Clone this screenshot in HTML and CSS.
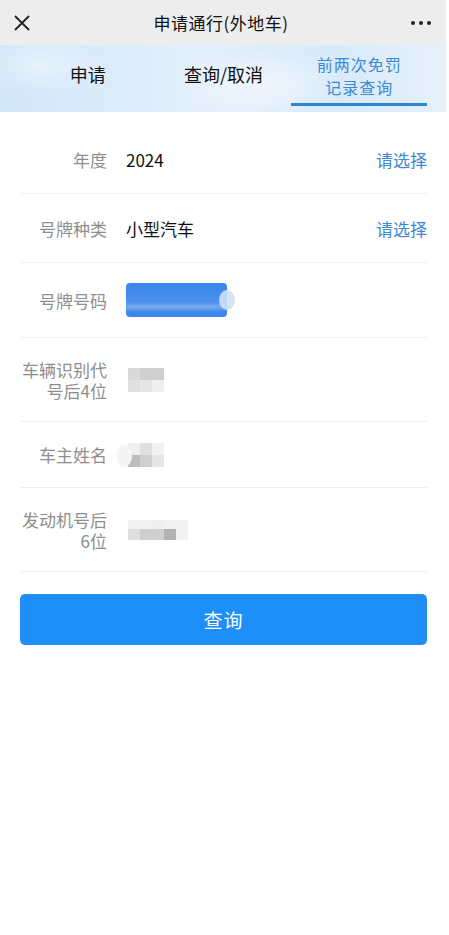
FILE: index.html
```html
<!DOCTYPE html>
<html lang="zh-CN">
<head>
<meta charset="utf-8">
<title>申请通行(外地车)</title>
<link rel="stylesheet" href="styles.css">
</head>
<body>
<div class="app">
  <header class="topbar">
    <svg class="close" width="18" height="18" viewBox="0 0 18 18"><path d="M2 2L16 16M16 2L2 16" stroke="#222" stroke-width="1.8" fill="none"/></svg>
    <div class="title">申请通行(外地车)</div>
    <div class="more"><span></span><span></span><span></span></div>
  </header>
  <nav class="tabs">
    <div class="tab">申请</div>
    <div class="tab">查询/取消</div>
    <div class="tab active">前两次免罚<br>记录查询</div>
  </nav>
  <main class="form">
    <div class="row">
      <div class="label">年度</div>
      <div class="value">2024</div>
      <div class="pick">请选择</div>
    </div>
    <div class="row">
      <div class="label">号牌种类</div>
      <div class="value">小型汽车</div>
      <div class="pick">请选择</div>
    </div>
    <div class="row">
      <div class="label">号牌号码</div>
      <div class="value"><div class="plate"></div></div>
    </div>
    <div class="row tall">
      <div class="label">车辆识别代号后4位</div>
      <div class="value">
        <div class="mask m3">
          <i class="c1"></i><i class="c2 w2"></i>
          <i class="c3"></i><i class="c4"></i><i class="c5"></i>
        </div>
      </div>
    </div>
    <div class="row short">
      <div class="label">车主姓名</div>
      <div class="value">
        <div class="mask m3 name">
          <i class="c5"></i><i class="c3"></i><i class="c6"></i>
          <i class="c7"></i><i class="c2"></i><i class="c4"></i>
        </div>
      </div>
    </div>
    <div class="row tall">
      <div class="label">发动机号后6位</div>
      <div class="value">
        <div class="mask m5 engine">
          <i class="c6"></i><i class="c6"></i><i class="c5"></i><i class="c6"></i><i class="c6"></i>
          <i class="c3"></i><i class="c2"></i><i class="c2"></i><i class="c8"></i><i class="c6"></i>
        </div>
      </div>
    </div>
    <button class="submit">查询</button>
  </main>
</div>
</body>
</html>
```

FILE: styles.css
```css
* { box-sizing: border-box; }
html, body { margin: 0; padding: 0; background: #fff; }
body {
  font-family: "Noto Sans CJK SC", "Noto Sans", sans-serif;
  width: 449px;
}
.app { width: 446px; }

.topbar {
  height: 45px;
  background: #ededed;
  display: flex;
  align-items: center;
  justify-content: space-between;
  padding: 0 15px 0 13px;
  position: relative;
}
.close { display: block; }
.title {
  font-size: 17px;
  color: #111;
  letter-spacing: 0.5px;
  flex: 1;
  text-align: center;
}
.more { display: flex; gap: 4px; width: 20px; justify-content: flex-end; }
.more span { width: 4px; height: 4px; border-radius: 50%; background: #222; }

.tabs {
  height: 67px;
  display: flex;
  padding: 0 19px 0 20px;
  background:
    radial-gradient(ellipse 120px 50px at 260px 40px, rgba(255,255,255,0.55), rgba(255,255,255,0) 70%),
    radial-gradient(ellipse 90px 40px at 40px 20px, rgba(255,255,255,0.4), rgba(255,255,255,0) 70%),
    linear-gradient(90deg, #d3e7fa 0%, #e3effb 45%, #d9eafa 75%, #e6f1fb 100%);
}
.tab {
  flex: 1;
  display: flex;
  align-items: center;
  justify-content: center;
  text-align: center;
  font-size: 18px;
  color: #111;
  border-bottom: 3px solid transparent;
  margin-bottom: 6px;
}
.tab.active {
  font-size: 16px;
  line-height: 23px;
  color: #3b8ad6;
  letter-spacing: 1px;
  border-bottom-color: #2e85d7;
  padding-top: 4px;
}

.form { padding: 13px 19px 0 20px; }
.row {
  display: flex;
  align-items: center;
  min-height: 69px;
  padding: 20px 0;
  border-bottom: 1px solid #f0f0f0;
}
.row.short { min-height: 66px; }
.row.tall { min-height: 84px; }
.label {
  width: 87px;
  flex: none;
  text-align: right;
  font-size: 17px;
  line-height: 21px;
  color: #8e8e8e;
}
.value {
  flex: 1;
  margin-left: 19px;
  font-size: 17px;
  color: #111;
}
.pick { font-size: 17px; color: #3b8ad6; }

.plate {
  position: relative;
  width: 101px;
  height: 34px;
  border-radius: 4px;
  background: linear-gradient(180deg, #3a86ec 0%, #4a8fec 55%, #7aaaf0 70%, #3e88ec 85%, #3a86ec 100%);
}
.plate::after {
  content: "";
  position: absolute;
  right: -8px;
  top: 7px;
  width: 16px;
  height: 20px;
  border-radius: 50%;
  background: #cfe0f7;
  opacity: 0.9;
}

.mask { display: grid; grid-auto-rows: 12px; margin-left: 2px; }
.mask.m3 { grid-template-columns: repeat(3, 12px); }
.mask.m5 { grid-template-columns: repeat(5, 12px); grid-template-rows: 9px 11px; }
.mask i { display: block; }
.mask .w2 { grid-column: span 2; }
.c1 { background: #d9d9d9; }
.c2 { background: #cfcfcf; }
.c3 { background: #dfdfdf; }
.c4 { background: #e6e6e6; }
.c5 { background: #efefef; }
.c6 { background: #f2f2f2; }
.c7 { background: #bdbdbd; }
.c8 { background: #b3b3b3; }
.mask.name { position: relative; }
.mask.name::before {
  content: "";
  position: absolute;
  left: -12px;
  top: 2px;
  width: 16px;
  height: 22px;
  border-radius: 50%;
  background: #f5f5f5;
}

.submit {
  display: block;
  width: 100%;
  height: 51px;
  margin-top: 22px;
  border: 0;
  border-radius: 5px;
  background: #1e8ff9;
  color: #fff;
  font-family: inherit;
  font-size: 19px;
  letter-spacing: 1px;
}
```
